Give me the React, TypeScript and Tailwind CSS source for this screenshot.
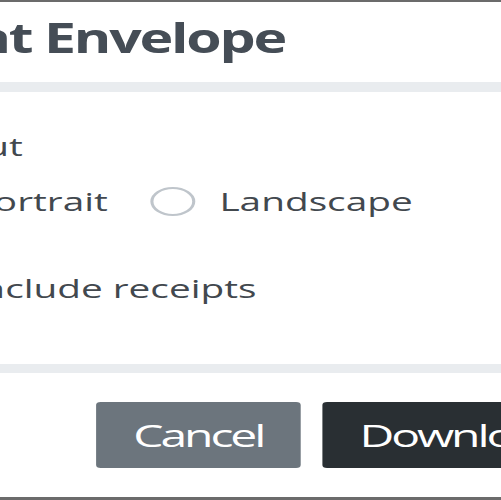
import React from "react";

function Radio() {
  return <span className="block w-[29px] h-[29px] shrink-0 rounded-full border-2 border-[#bfc5cb] bg-white" />;
}

export default function App() {
  return (
    <div className="w-[501px] h-[500px] overflow-hidden bg-white">
      <div
        className="w-[323px] h-[500px] origin-top-left scale-x-[1.55] flex flex-col text-[#42484e]"
        style={{ fontFamily: '"Open Sans", sans-serif' }}
      >
        <div className="h-[2px] bg-[#6b6b6b] -mx-[200px]" />
        <div className="pt-[15px] pb-[23px]">
          <div className="ml-[-64px] inline-block origin-left scale-x-[0.9] whitespace-nowrap text-[41px] leading-[41px] font-bold tracking-[-1.6px] text-[#454d56]">
            Print Envelope
          </div>
        </div>
        <div className="h-[10px] bg-[#e9ecef] -mx-[200px]" />
        <div className="ml-[-64px] flex flex-col">
          <div className="mt-[42px] text-[25px] leading-[25px] font-medium whitespace-nowrap">Layout</div>
          <div className="mt-[28px] flex items-center whitespace-nowrap text-[25px] leading-[25px]">
            <Radio />
            <span className="ml-[16px]">Portrait</span>
            <span className="ml-[27px]"><Radio /></span>
            <span className="ml-[16px]">Landscape</span>
          </div>
          <div className="mt-[58px] flex items-center whitespace-nowrap text-[25px] leading-[25px] h-[29px]">
            <span className="block w-[29px] h-[29px] shrink-0 rounded-[4px] border-2 border-[#bfc5cb]" />
            <span className="ml-[16px]">Include receipts</span>
          </div>
        </div>
        <div className="mt-[61px] h-[10px] bg-[#e9ecef] -mx-[200px]" />
        <div className="mt-[29px] flex ml-[62px] whitespace-nowrap">
          <button className="h-[66px] px-[24px] rounded-[3px] bg-[#6c757d] text-white text-[31px] leading-[31px] tracking-[-2px]">
            Cancel
          </button>
          <button className="ml-[14px] h-[66px] px-[24px] rounded-[3px] bg-[#292f33] text-white text-[31px] leading-[31px] tracking-[-2px]">
            Download
          </button>
        </div>
        <div className="mt-[29px] h-[3px] bg-[#6b6b6b] -mx-[200px]" />
      </div>
    </div>
  );
}
